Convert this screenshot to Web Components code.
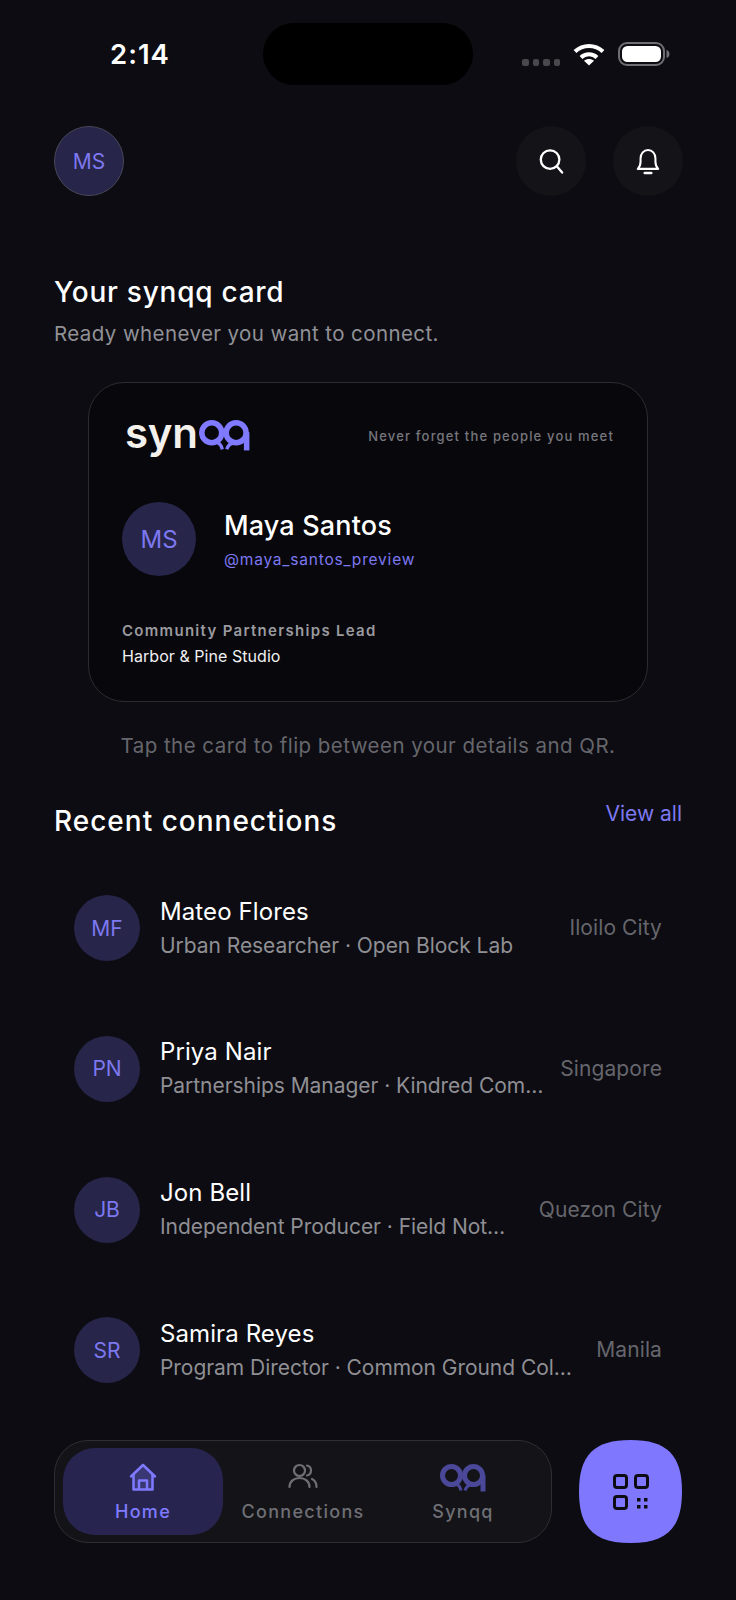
<!DOCTYPE html>
<html>
<head>
<meta charset="utf-8">
<title>synqq</title>
<style>
  html, body { margin: 0; padding: 0; background: #0c0c12; }
  body { font-family: Inter, "Noto Sans", sans-serif; color: #fff; }
</style>
</head>
<body>
<app-screen>
  <status-bar></status-bar>
  <top-bar></top-bar>
  <card-section></card-section>
  <recent-list>
    <connection-row initials="MF" name="Mateo Flores" detail="Urban Researcher · Open Block Lab" place="Iloilo City"></connection-row>
    <connection-row initials="PN" name="Priya Nair" detail="Partnerships Manager · Kindred Com…" place="Singapore"></connection-row>
    <connection-row initials="JB" name="Jon Bell" detail="Independent Producer · Field Not…" place="Quezon City"></connection-row>
    <connection-row initials="SR" name="Samira Reyes" detail="Program Director · Common Ground Col…" place="Manila"></connection-row>
  </recent-list>
  <bottom-nav></bottom-nav>
</app-screen>

<script>
class AppScreen extends HTMLElement {
    constructor() {
        super();
        this.attachShadow({mode: "open"});
    }
    connectedCallback() {
        this.shadowRoot.innerHTML = `
            <style>
                :host {
                    display: block;
                    position: relative;
                    width: 736px;
                    height: 1600px;
                    overflow: hidden;
                    background: #0c0c12;
                }
            </style>
            <slot></slot>
        `;
    }
}

//the two rings of the logo, the colour comes from the parent
class QqMark extends HTMLElement {
    constructor() {
        super();
        this.attachShadow({mode: "open"});
    }
    connectedCallback() {
        this.shadowRoot.innerHTML = `
            <style>
                :host { display: block; width: 46px; height: 28px; }
                svg { display: block; width: 100%; height: 100%; }
            </style>
            <svg viewBox="0 0 46 28" fill="none" stroke="currentColor" stroke-width="5">
                <circle cx="11.500" cy="11.500" r="9"/>
                <circle cx="33.500" cy="11.500" r="9"/>
                <path d="M43 11v16.500" stroke-width="5"/>
                <path d="M16 20c2.500 1 4.300 3 5 6.500" stroke-width="3"/>
                <path d="M30.500 21c-2.500 .5-4.500 2.500-5.500 5.500" stroke-width="3"/>
            </svg>
        `;
    }
}

class StatusBar extends HTMLElement {
    constructor() {
        super();
        this.attachShadow({mode: "open"});
    }
    connectedCallback() {
        this.shadowRoot.innerHTML = `
            <style>
                :host {
                    display: flex;
                    align-items: flex-start;
                    height: 126px;
                    padding: 23px 0 0 110px;
                    box-sizing: border-box;
                }
                .time {
                    width: 153px;
                    margin-top: 16px;
                    font: 600 27.500px/30px Inter, sans-serif;
                    letter-spacing: 1px;
                    color: #fff;
                }
                .island {
                    width: 210px;
                    height: 62px;
                    border-radius: 31px;
                    background: #000;
                }
                .icons {
                    display: flex;
                    align-items: center;
                    margin: 19px 0 0 49px;
                    height: 24px;
                }
                .dots { display: flex; gap: 4px; margin: 17px 13px 0 0; }
                .dots i { width: 6.500px; height: 6.500px; border-radius: 2px; background: #48484d; }
                svg { display: block; }
            </style>
            <div class="time">2:14</div>
            <div class="island"></div>
            <div class="icons">
                <div class="dots"><i></i><i></i><i></i><i></i></div>
                <svg width="32" height="24" viewBox="0 0 32 24" fill="none" stroke="#fff" stroke-width="4">
                    <path d="M2 9.500C10 2 22 2 30 9.500"/>
                    <path d="M8 15.500c4.500-4.300 11.500-4.300 16 0"/>
                    <path d="M16 23.500l-5-4.800c3-2.400 7-2.400 10 0z" fill="#fff" stroke="none"/>
                </svg>
                <svg style="margin-left:13px" width="52" height="24" viewBox="0 0 52 24">
                    <rect x="1" y="1" width="45" height="22" rx="8" fill="none" stroke="#6f6f73" stroke-width="2"/>
                    <rect x="4" y="4" width="39" height="16" rx="5.500" fill="#fff"/>
                    <path d="M48.500 8c2 .5 3 2.200 3 4s-1 3.500-3 4z" fill="#6f6f73"/>
                </svg>
            </div>
        `;
    }
}

class RoundButton extends HTMLElement {
    constructor() {
        super();
        this.attachShadow({mode: "open"});
    }
    connectedCallback() {
        this.shadowRoot.innerHTML = `
            <style>
                :host {
                    display: flex;
                    align-items: center;
                    justify-content: center;
                    width: 70px;
                    height: 70px;
                    border-radius: 50%;
                    background: #131318;
                }
            </style>
            <slot></slot>
        `;
    }
}

class TopBar extends HTMLElement {
    constructor() {
        super();
        this.attachShadow({mode: "open"});
    }
    connectedCallback() {
        this.shadowRoot.innerHTML = `
            <style>
                :host {
                    display: flex;
                    align-items: center;
                    justify-content: space-between;
                    padding: 0 53px 0 54px;
                }
                .me {
                    display: flex;
                    align-items: center;
                    justify-content: center;
                    width: 70px;
                    height: 70px;
                    box-sizing: border-box;
                    border-radius: 50%;
                    border: 1.500px solid #48485a;
                    background: #272549;
                    color: #7d78f0;
                    font: 400 21px Inter, sans-serif;
                }
                .actions { display: flex; gap: 27px; }
                svg { display: block; }
            </style>
            <div class="me">MS</div>
            <div class="actions">
                <round-button>
                    <svg width="26" height="28" viewBox="0 0 28 30" fill="none" stroke="#fff" stroke-width="2.500" stroke-linecap="round">
                        <circle cx="13" cy="13.500" r="10"/>
                        <path d="M20.500 21l5.500 6.500"/>
                    </svg>
                </round-button>
                <round-button>
                    <svg width="26" height="28" viewBox="0 0 28 30" fill="none" stroke="#fff" stroke-width="2.200" stroke-linejoin="round">
                        <path d="M3 23.500c2.500-2.500 3-4.500 3-8V12c0-5 3.500-8.800 8-8.800s8 3.800 8 8.800v3.500c0 3.500.5 5.500 3 8z"/>
                        <path d="M10.500 28h7" stroke-width="2.800" stroke-linecap="round"/>
                    </svg>
                </round-button>
            </div>
        `;
    }
}

class CardSection extends HTMLElement {
    constructor() {
        super();
        this.attachShadow({mode: "open"});
    }
    connectedCallback() {
        this.shadowRoot.innerHTML = `
            <style>
                :host {
                    display: block;
                    padding: 76px 54px 0;
                }
                h2 {
                    margin: 0;
                    font: 500 28px/40px Inter, sans-serif;
                    letter-spacing: 0.75px;
                    color: #fff;
                }
                .lead {
                    margin-top: 7px;
                    font: 400 20.500px/30px Inter, sans-serif;
                    letter-spacing: 0.4px;
                    color: #919196;
                }
                .card {
                    margin: 33px 34px 0;
                    height: 320px;
                    box-sizing: border-box;
                    padding: 36px 33px 0;
                    border: 1.500px solid #2c2c32;
                    border-radius: 36px;
                    background: #07070c;
                }
                .brand {
                    display: flex;
                    align-items: center;
                    justify-content: space-between;
                    height: 34px;
                }
                .logo {
                    display: flex;
                    align-items: flex-start;
                    gap: 1px;
                    margin: -6px 0 0 3px;
                    color: #7f7aff;
                }
                .logo b {
                    font: 600 42px/34px Inter, sans-serif;
                    letter-spacing: -0.3px;
                    color: #f4f1ec;
                }
                .logo qq-mark { width: 51px; height: 31px; margin-top: 4px; }
                .tag {
                    font: 500 13px Inter, sans-serif;
                    letter-spacing: 1.170px;
                    color: #77777d;
                }
                .who {
                    display: flex;
                    align-items: center;
                    gap: 28px;
                    margin-top: 49px;
                }
                .big {
                    display: flex;
                    align-items: center;
                    justify-content: center;
                    width: 74px;
                    height: 74px;
                    border-radius: 50%;
                    background: #272549;
                    color: #7d78f0;
                    font: 400 24px Inter, sans-serif;
                }
                .name {
                    font: 500 27px/34px Inter, sans-serif;
                    letter-spacing: 0.15px;
                    color: #fff;
                }
                .handle {
                    margin-top: 7px;
                    font: 400 15.500px/20px Inter, sans-serif;
                    letter-spacing: 0.8px;
                    color: #7d78f0;
                }
                .role {
                    margin-top: 45px;
                    font: 600 15px/20px Inter, sans-serif;
                    letter-spacing: 1.300px;
                    color: #9a9a9f;
                }
                .org {
                    margin-top: 5px;
                    font: 400 16px/20px Inter, sans-serif;
                    letter-spacing: 0.05px;
                    color: #f0f0f2;
                }
                .hint {
                    margin-top: 29px;
                    text-align: center;
                    font: 400 20.500px/30px Inter, sans-serif;
                    letter-spacing: 0.46px;
                    color: #66666c;
                }
            </style>
            <h2>Your synqq card</h2>
            <div class="lead">Ready whenever you want to connect.</div>
            <div class="card">
                <div class="brand">
                    <div class="logo"><b>syn</b><qq-mark></qq-mark></div>
                    <div class="tag">Never forget the people you meet</div>
                </div>
                <div class="who">
                    <div class="big">MS</div>
                    <div>
                        <div class="name">Maya Santos</div>
                        <div class="handle">@maya_santos_preview</div>
                    </div>
                </div>
                <div class="role">Community Partnerships Lead</div>
                <div class="org">Harbor &amp; Pine Studio</div>
            </div>
            <div class="hint">Tap the card to flip between your details and QR.</div>
        `;
    }
}

class RecentList extends HTMLElement {
    constructor() {
        super();
        this.attachShadow({mode: "open"});
    }
    connectedCallback() {
        this.shadowRoot.innerHTML = `
            <style>
                :host {
                    display: block;
                    padding: 40px 54px 0;
                }
                .head {
                    display: flex;
                    align-items: flex-start;
                    justify-content: space-between;
                    margin-bottom: 45px;
                }
                h2 {
                    margin: 0;
                    font: 500 28px/40px Inter, sans-serif;
                    letter-spacing: 1px;
                    color: #fff;
                }
                a {
                    margin-top: -2px;
                    font: 400 21px/30px Inter, sans-serif;
                    color: #7d78f0;
                    text-decoration: none;
                }
                .rows {
                    display: flex;
                    flex-direction: column;
                    gap: 56.800px;
                }
            </style>
            <div class="head">
                <h2>Recent connections</h2>
                <a>View all</a>
            </div>
            <div class="rows"><slot></slot></div>
        `;
    }
}

class ConnectionRow extends HTMLElement {
    constructor() {
        super();
        this.attachShadow({mode: "open"});
    }
    connectedCallback() {
        this.shadowRoot.innerHTML = `
            <style>
                :host {
                    display: flex;
                    align-items: center;
                    gap: 20px;
                    height: 84px;
                    padding: 0 20px;
                }
                .ava {
                    flex: none;
                    display: flex;
                    align-items: center;
                    justify-content: center;
                    width: 66px;
                    height: 66px;
                    border-radius: 50%;
                    background: #272549;
                    color: #7d78f0;
                    font: 400 21px Inter, sans-serif;
                }
                .text { flex: 1; min-width: 0; }
                .name {
                    font: 400 24px/32px Inter, sans-serif;
                    letter-spacing: 0.1px;
                    color: #fff;
                }
                .detail {
                    margin-top: 3px;
                    font: 400 21px/30px Inter, sans-serif;
                    letter-spacing: -0.05px;
                    color: #8f8f94;
                    white-space: nowrap;
                }
                .place {
                    flex: none;
                    font: 400 21px/30px Inter, sans-serif;
                    letter-spacing: 0.1px;
                    color: #66666c;
                }
            </style>
            <div class="ava">${this.getAttribute("initials")}</div>
            <div class="text">
                <div class="name">${this.getAttribute("name")}</div>
                <div class="detail">${this.getAttribute("detail")}</div>
            </div>
            <div class="place">${this.getAttribute("place")}</div>
        `;
    }
}

class NavItem extends HTMLElement {
    constructor() {
        super();
        this.attachShadow({mode: "open"});
    }
    connectedCallback() {
        this.shadowRoot.innerHTML = `
            <style>
                :host {
                    flex: 1;
                    display: flex;
                    flex-direction: column;
                    align-items: center;
                    justify-content: flex-end;
                    gap: 8px;
                    padding-bottom: 11px;
                    box-sizing: border-box;
                    border-radius: 32px;
                    color: #6f6f75;
                    font: 500 18px/24px Inter, sans-serif;
                    letter-spacing: 1.300px;
                }
                :host([active]) {
                    background: #27254f;
                    color: #7f7aff;
                }
            </style>
            <slot name="icon"></slot>
            <slot></slot>
        `;
    }
}

class BottomNav extends HTMLElement {
    constructor() {
        super();
        this.attachShadow({mode: "open"});
    }
    connectedCallback() {
        this.shadowRoot.innerHTML = `
            <style>
                :host {
                    position: absolute;
                    left: 54px;
                    right: 54px;
                    top: 1440px;
                    display: flex;
                    gap: 27px;
                }
                .bar {
                    flex: 1;
                    display: flex;
                    height: 103px;
                    box-sizing: border-box;
                    padding: 7px 8px;
                    border: 1.500px solid #2e2e34;
                    border-radius: 34px;
                    background: #131318;
                }
                .fab {
                    flex: none;
                    display: flex;
                    align-items: center;
                    justify-content: center;
                    width: 103px;
                    height: 103px;
                    background: #7f78ff;
                    clip-path: path("M51.500 0C88 0 103 15 103 51.500S88 103 51.500 103 0 88 0 51.500 15 0 51.500 0Z");
                }
                svg { display: block; }
            </style>
            <div class="bar">
                <nav-item active>
                    <svg slot="icon" width="30" height="30" viewBox="0 0 30 30" fill="none" stroke="currentColor" stroke-width="2.500" stroke-linejoin="round">
                        <path d="M15 3L3 14.500M15 3l12 11.500" stroke-linecap="round"/>
                        <path d="M15 3L5 12.500v15h20v-15z" fill="currentColor" fill-opacity=".22" stroke="none"/>
                        <path d="M5.500 12v15.500h19V12"/>
                        <path d="M11 27.500v-9h8v9"/>
                    </svg>
                    Home
                </nav-item>
                <nav-item>
                    <svg slot="icon" width="30" height="30" viewBox="0 0 30 30" fill="none" stroke="currentColor" stroke-width="2.200" stroke-linecap="round">
                        <circle cx="11.500" cy="8.500" r="5.500"/>
                        <path d="M1.500 25c0-5.500 4.500-9 10-9s10 3.500 10 9"/>
                        <path d="M19 3.500c2.500.5 4 2.500 4 5s-1.500 4.500-4 5"/>
                        <path d="M24 17c2.800 1.300 4.500 4 4.500 8"/>
                    </svg>
                    Connections
                </nav-item>
                <nav-item>
                    <qq-mark slot="icon" style="color:#4b4899"></qq-mark>
                    Synqq
                </nav-item>
            </div>
            <div class="fab">
                <svg width="36" height="36" viewBox="0 0 36 36" fill="none" stroke="#0c0c12" stroke-width="3">
                    <rect x="1.500" y="1.500" width="12" height="12" rx="2.500"/>
                    <rect x="22.500" y="1.500" width="12" height="12" rx="2.500"/>
                    <rect x="1.500" y="22.500" width="12" height="12" rx="2.500"/>
                    <g fill="#0c0c12" stroke="none">
                        <rect x="24" y="24" width="3.500" height="3.500"/>
                        <rect x="31" y="24" width="3.500" height="3.500"/>
                        <rect x="24" y="31" width="3.500" height="3.500"/>
                        <rect x="31" y="31" width="3.500" height="3.500"/>
                    </g>
                </svg>
            </div>
        `;
    }
}

customElements.define("app-screen", AppScreen);
customElements.define("qq-mark", QqMark);
customElements.define("status-bar", StatusBar);
customElements.define("round-button", RoundButton);
customElements.define("top-bar", TopBar);
customElements.define("card-section", CardSection);
customElements.define("recent-list", RecentList);
customElements.define("connection-row", ConnectionRow);
customElements.define("nav-item", NavItem);
customElements.define("bottom-nav", BottomNav);
</script>
</body>
</html>
